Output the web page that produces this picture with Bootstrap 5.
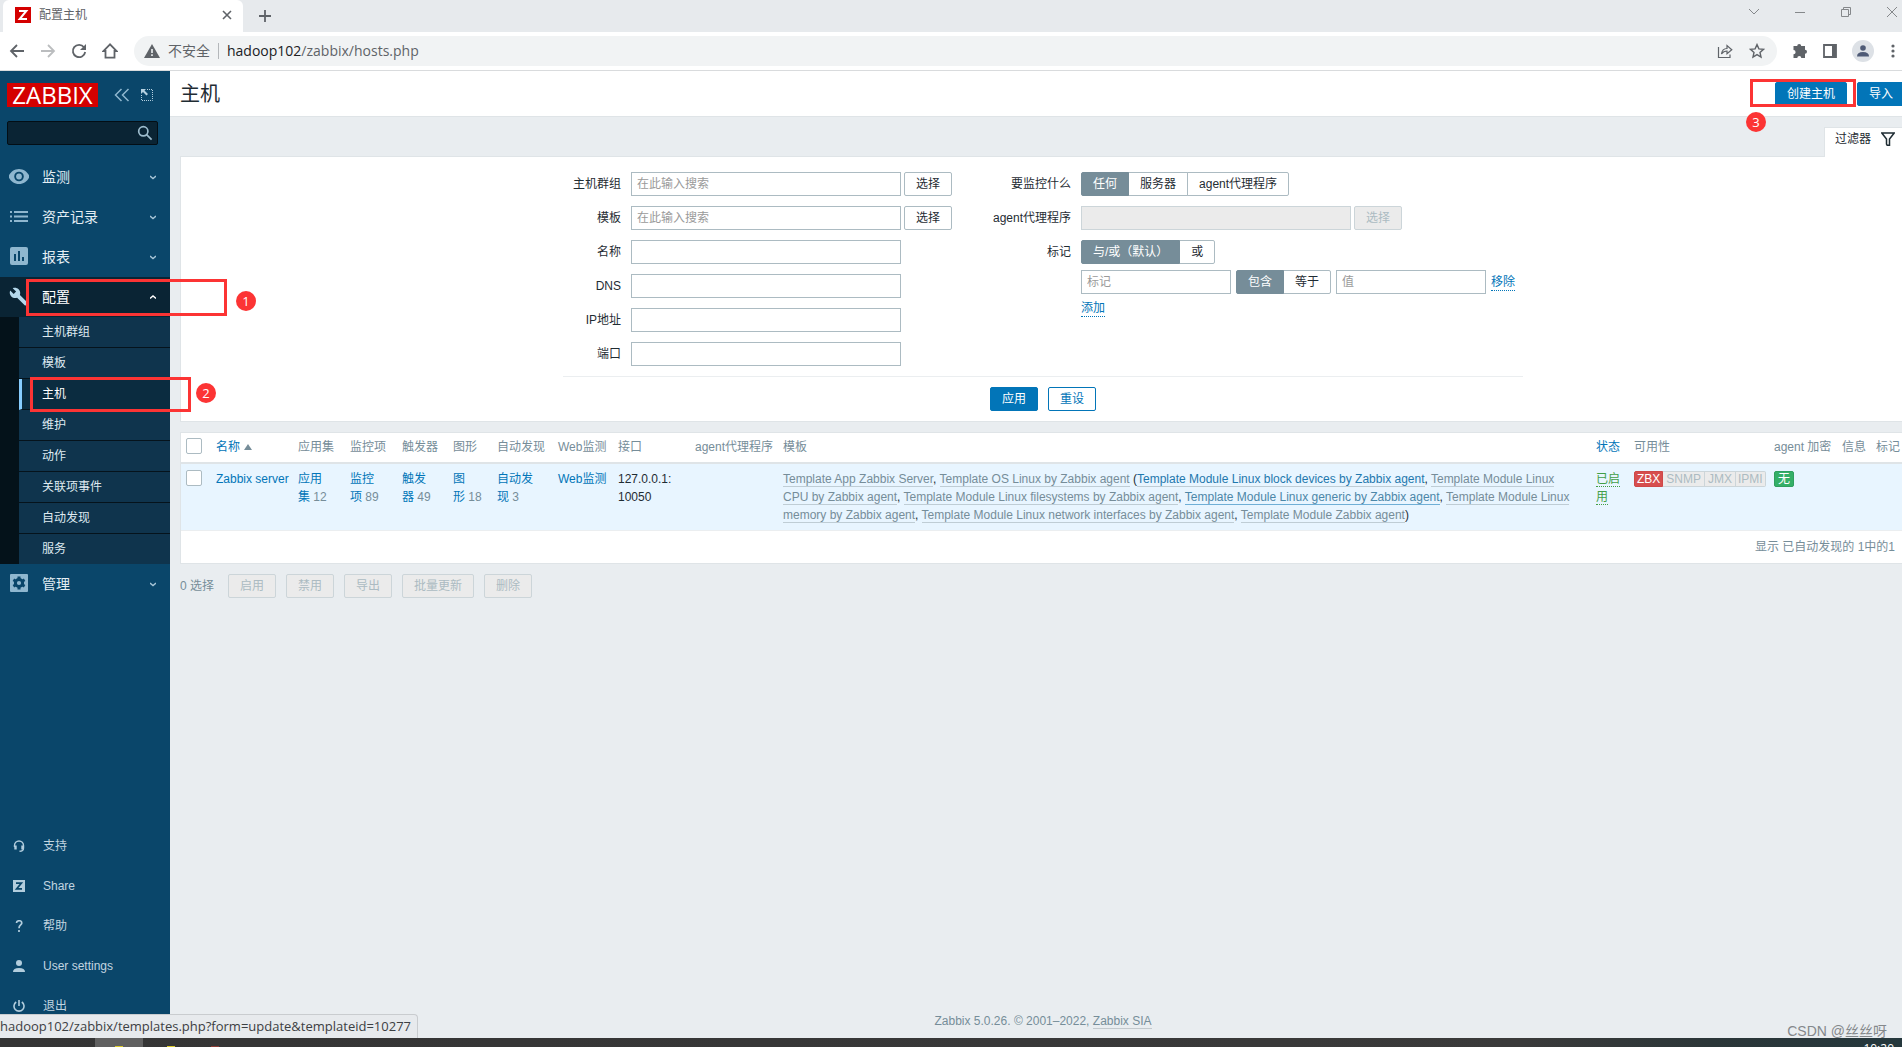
<!DOCTYPE html>
<html lang="zh-CN">
<head>
<meta charset="utf-8">
<meta name="viewport" content="width=device-width, initial-scale=1">
<title>配置主机</title>
<link rel="stylesheet" href="https://cdn.jsdelivr.net/npm/bootstrap@5.3.0/dist/css/bootstrap.min.css">
<script src="https://cdn.jsdelivr.net/npm/bootstrap@5.3.0/dist/js/bootstrap.bundle.min.js"></script>
<style>
  :root { --zbx-blue:#0275b8; --zbx-grey:#768d99; --zbx-text:#1f2c33; --zbx-edge:#dfe4e7; --zbx-field:#acbbc2; --mark-red:#fc3434; }
  body { font-family:"Liberation Sans","Noto Sans CJK SC",sans-serif; font-size:12px; line-height:18px; color:var(--zbx-text); background:#e9edf0; }
  svg { display:block; flex:none; }

  /* browser frame */
  .chrome-ui { font-family:"Open Sans","Noto Sans CJK SC",sans-serif; color:#5f6368; }
  .tab-strip { height:32px; background:#e7eaed; }
  .page-tab { width:240px; margin-left:3px; padding:0 10px 2px 12px; background:#fff; border-radius:6px 6px 0 0; }
  .page-tab span { font-size:12px; }
  .chrome-ui button { border:0; background:none; padding:0; color:inherit; }
  .win-keys { gap:30px; margin-right:2px; color:#85888b; }
  .tool-strip { height:39px; background:#fff; border-bottom:1px solid #d9dbdd; gap:15px; padding:0 5px 0 9px; }
  .omnibox { height:30px; border-radius:15px; background:#f1f3f4; font-size:14px; margin-left:1px; padding:0 12px 0 10px; }
  .omnibox .sep { width:1px; height:16px; background:#b4b7ba; margin:0 8px; }
  .omnibox a { color:inherit; }
  .omnibox a b { font-weight:400; color:#202124; }
  .chrome-ui .avatar-dot { width:22px; height:22px; border-radius:50%; background:#dde1e6; }

  /* sidebar */
  .side { width:170px; background:#0a466a; flex:none; }
  .side-top { padding:12px 12px 0 7px; }
  .zlogo { width:91px; height:24px; background:#d40000; color:#fff; font:24px/24px "Open Sans",sans-serif; text-align:center; }
  .side-search { height:24px; margin:14px 12px 12px 7px; background:#0a2434; border:1px solid #030e15; border-radius:2px; padding-right:4px; }
  .side-search input { background:none; border:0; width:100%; color:#fff; min-width:0; outline:0; padding:0 6px; }
  .main-item { height:40px; padding:0 14px 0 9px; color:#e4eef4; font-size:14px; gap:13px; text-decoration:none; }
  .main-item.active { background:#0a2434; color:#fff; }
  .main-item svg:first-child { color:#8fb7cf; }
  .submenu { border-left:19px solid #04121a; }
  .submenu a { display:block; height:31px; padding:6px 0 0 23px; border-bottom:1px solid #05131c; background:#0f344d; color:#dfeaf1; text-decoration:none; }
  .submenu li:last-child a { height:30px; border-bottom:0; }
  .submenu a.active { background:#0b2c40; color:#fff; border-left:3px solid #87cdff; padding-left:20px; }
  .low-menu { padding-bottom:12px; }
  .low-menu a { height:40px; padding:0 13px; gap:18px; color:#c2d5e0; text-decoration:none; }
  .low-menu svg { color:#b2cddd; }

  /* page */
  .page-main { min-width:0; margin-right:-14px; }
  .page-head { background:#fff; border-bottom:1px solid var(--zbx-edge); padding:10px 11px 9px 10px; gap:10px; }
  .page-head h1 { font-size:20px; line-height:26px; margin:0; }
  .btn { --bs-btn-font-size:12px; --bs-btn-line-height:16px; --bs-btn-padding-x:11px; --bs-btn-padding-y:3px; --bs-btn-border-radius:2px; height:24px; white-space:nowrap; }
  .btn-zbx { --bs-btn-color:#fff; --bs-btn-bg:var(--zbx-blue); --bs-btn-border-color:var(--zbx-blue); --bs-btn-hover-color:#fff; --bs-btn-hover-bg:#02659f; }
  .btn-line { --bs-btn-color:var(--zbx-blue); --bs-btn-bg:#fff; --bs-btn-border-color:var(--zbx-blue); }
  .btn-pick { --bs-btn-color:var(--zbx-text); --bs-btn-bg:#fff; --bs-btn-border-color:var(--zbx-field); --bs-btn-active-bg:var(--zbx-grey); --bs-btn-active-color:#fff; --bs-btn-active-border-color:var(--zbx-grey); }
  .btn-off { --bs-btn-disabled-color:#acbbc2; --bs-btn-disabled-bg:#ebebeb; --bs-btn-disabled-border-color:#ccd5d9; --bs-btn-disabled-opacity:1; }
  .page-body { padding:10px 10px 0; }
  .panel { background:#fff; border:1px solid var(--zbx-edge); }
  .filter-tab { background:#fff; border:1px solid var(--zbx-edge); border-bottom:0; padding:0 10px 8px; height:30px; gap:10px; margin-bottom:-1px; z-index:1; position:relative; color:inherit; text-decoration:none; }
  .filter-box { padding:15px 0 10px; }
  .filter-form { width:960px; }
  .pair { display:flex; align-items:center; gap:10px; margin-bottom:10px; min-height:24px; }
  .pair > .cap { width:58px; text-align:right; white-space:nowrap; }
  .right-col { padding-left:10px; }
  .right-col .cap { width:78px; }
  .left-col { width:420px; }
  .with-pick { display:flex; gap:3px; }
  .tag-mode { margin-bottom:6px; }
  .tag-row { margin-bottom:2px; }
  .tag-cells { display:flex; align-items:center; gap:5px; }
  .form-control { height:24px; padding:2px 5px; font-size:12px; line-height:18px; border:1px solid var(--zbx-field); border-radius:0; width:270px; color:var(--zbx-text); }
  .form-control::placeholder { color:#9a9a9a; }
  .form-control:disabled { background:#ebebeb; border-color:#ccd5d9; }
  .form-control.half { width:150px; }
  .dot-link { text-decoration:none; border-bottom:1px dotted; line-height:16px; color:var(--zbx-blue); }
  .filter-foot { border-top:1px solid #ebeef0; padding-top:10px; gap:10px; }

  .hosts-panel { margin-top:10px; }
  .hosts { table-layout:fixed; margin:0; --bs-table-bg:transparent; width:100%; }
  .hosts th, .hosts td { padding:6px 5px; vertical-align:top; }
  .hosts th { font-weight:400; color:var(--zbx-grey) !important; white-space:nowrap; padding:5px 5px 6px; border-bottom:2px solid var(--zbx-edge); }
  .hosts tbody td { background:#e8f5ff; border-bottom:1px solid #ebeef0; color:var(--zbx-text); }
  .hosts a { color:var(--zbx-blue); text-decoration:none; }
  .hosts .num { color:var(--zbx-grey); }
  .hosts td.tpl { padding-right:12px; }
  .hosts .tpl a { color:var(--zbx-grey); border-bottom:1px solid #bfcdd5; }
  .hosts .tpl a.hot { color:#1f78ad; }
  .hosts .tpl a.warm { color:#4c87a8; border-color:#6fafd6; }
  .hosts .ok-link { color:#429e47; border-bottom:1px dotted; }
  .hosts .form-check-input { width:16px; height:16px; margin:0; border:1px solid var(--zbx-field); border-radius:2px; display:block; }
  .flags { display:inline-flex; line-height:14px; }
  .flags span { border:1px solid #ccd5d9; border-left-width:0; background:#ebebeb; color:#acbbc2; padding:0 3px; }
  .flags span:first-child { border:1px solid #cf4747; background:#d64e4e; color:#fff; border-radius:2px 0 0 2px; padding:0 2px; }
  .flags span:last-child { border-radius:0 2px 2px 0; padding:0 2px; }
  .enc { display:inline-block; background:#34af67; border:1px solid #2f9f5e; border-radius:2px; color:#fff; line-height:14px; padding:0 3px; }
  .muted { color:var(--zbx-grey); }
  .found-row { padding:7px 10px; text-align:right; }
  .bulk { margin-top:10px; gap:10px; }
  .bulk .muted { margin-right:4px; }
  .page-foot { padding:0 0 8px; color:var(--zbx-grey); }
  .page-foot a { color:inherit; text-decoration:none; border-bottom:1px solid #c3c9cd; }

  /* overlays */
  .status-tip { position:absolute; left:0; bottom:0; height:24px; padding:2px 6px 0 0; background:#e7eaed; border:1px solid #c9cccf; border-width:1px 1px 0 0; border-radius:0 4px 0 0; color:#3c4043; font-size:13px; z-index:5; }
  .frame-mark { position:absolute; border:3px solid var(--mark-red); z-index:6; pointer-events:none; }
  .frame-mark i { position:absolute; width:20px; height:20px; border-radius:50%; background:var(--mark-red); color:#fff; font:13px/20px "Open Sans",sans-serif; text-align:center; }
  .mk1 { left:26px; top:279px; width:201px; height:37px; } .mk1 i { right:-32px; top:9px; }
  .mk2 { left:30px; top:377px; width:161px; height:35px; } .mk2 i { right:-28px; top:3px; }
  .mk3 { right:46px; top:79px; width:106px; height:28px; } .mk3 i { left:-7px; top:30px; }
  .watermark { position:absolute; right:15px; bottom:-2px; font-size:14px; line-height:18px; color:#84888b; z-index:4; }
  .taskbar { height:9px; background:linear-gradient(90deg,#343434 0,#3a3a3a 80%,#2b3638 90%,#25383d 100%); overflow:hidden; position:relative; flex:none; }
  .taskbar .slot { margin-left:95px; width:48px; background:#606060; }
  .taskbar .spot { width:8px; height:1px; align-self:flex-end; background:#d9c92b; }
  .taskbar .spot.red { background:#8a3b34; margin-left:36px; }
  .taskbar time { position:absolute; right:8px; top:4px; color:#fff; font:12px/14px "Open Sans",sans-serif; }
</style>
</head>
<body class="vh-100 d-flex flex-column overflow-hidden position-relative">

<header class="chrome-ui flex-shrink-0">
  <div class="tab-strip d-flex">
    <div class="page-tab d-flex align-items-center gap-2">
      <svg width="16" height="16" viewBox="0 0 16 16"><path fill="#d40000" d="M0 0h16v16H0z"/><path fill="none" stroke="#fff" stroke-width="2" d="M4 4h7.3L4.7 12H12"/></svg>
      <span>配置主机</span>
      <button class="ms-auto" aria-label="关闭标签页"><svg width="12" height="12" viewBox="0 0 12 12" stroke="currentColor" stroke-width="1.6"><path d="M2 2l8 8M10 2l-8 8"/></svg></button>
    </div>
    <button class="ms-3" aria-label="新标签页"><svg width="12" height="12" viewBox="0 0 12 12" stroke="currentColor" stroke-width="1.8"><path d="M6 0v12M0 6h12"/></svg></button>
    <div class="win-keys d-flex ms-auto align-items-start pt-1">
      <button aria-label="搜索标签页"><svg width="16" height="16" viewBox="0 0 16 16" fill="none" stroke="currentColor"><path d="M3 5l5 5 5-5"/></svg></button>
      <button aria-label="最小化"><svg width="16" height="16" viewBox="0 0 16 16" fill="none" stroke="currentColor"><path d="M3 8.500h10"/></svg></button>
      <button aria-label="还原"><svg width="16" height="16" viewBox="0 0 16 16" fill="none" stroke="currentColor"><path d="M3.500 5.500h7v7h-7zM5.500 5.500v-2h7v7h-2"/></svg></button>
      <button aria-label="关闭"><svg width="16" height="16" viewBox="0 0 16 16" fill="none" stroke="currentColor"><path d="M3 3l10 10M13 3L3 13"/></svg></button>
    </div>
  </div>
  <div class="tool-strip d-flex align-items-center">
    <button aria-label="后退"><svg width="16" height="16" viewBox="0 0 16 16" fill="none" stroke="currentColor" stroke-width="1.8"><path d="M15 8H2M8 2L2 8l6 6"/></svg></button>
    <button aria-label="前进"><svg width="16" height="16" viewBox="0 0 16 16" fill="none" stroke="#bbbdbf" stroke-width="1.8"><path d="M1 8h13M8 2l6 6-6 6"/></svg></button>
    <button aria-label="刷新"><svg width="16" height="16" viewBox="0 0 16 16"><path fill="none" stroke="currentColor" stroke-width="1.8" d="M13 4.200A6.200 6.200 0 1 0 14.200 9"/><path fill="currentColor" d="M15 1v6H9z"/></svg></button>
    <button aria-label="主页"><svg width="16" height="16" viewBox="0 0 16 16" fill="none" stroke="currentColor" stroke-width="1.800"><path d="M8 1.300L1.400 8H3.500v6.600h9V8h2.100z"/></svg></button>
    <div class="omnibox d-flex align-items-center flex-grow-1">
      <svg width="16" height="14" viewBox="0 0 16 14"><path fill="currentColor" d="M8 0l8 14H0z"/><path stroke="#f1f3f4" stroke-width="1.600" d="M8 5v4M8 10.300v1.600"/></svg>
      <span class="ms-2">不安全</span><span class="sep"></span>
      <a class="text-decoration-none" href="#"><b>hadoop102</b>/zabbix/hosts.php</a>
      <button class="ms-auto" aria-label="分享"><svg width="16" height="16" viewBox="0 0 16 16" fill="none" stroke="currentColor" stroke-width="1.200"><path d="M1.500 4v10.500h11.500v-3M4.500 11c.5-4 2.500-5.500 5.500-5.500V2.500l4.800 4.200-4.800 4V8c-2.500 0-4 .8-5.500 3z"/></svg></button>
      <button class="ms-3" aria-label="收藏"><svg width="16" height="16" viewBox="0 0 16 16" fill="none" stroke="currentColor" stroke-width="1.400"><path d="M8 1.600l1.900 4.300 4.600.4-3.500 3.100 1 4.600-4-2.400-4 2.400 1-4.600L1.500 6.300l4.600-.4z"/></svg></button>
    </div>
    <button aria-label="扩展程序"><svg width="16" height="16" viewBox="0 0 16 16" fill="currentColor"><path d="M5.200 3a2 2 0 0 1 4 0H13v3.800a2 2 0 0 1 0 4V15H9.300a2 2 0 0 0-4 0H1.500v-3.700a2 2 0 0 0 0-4.200V3z"/></svg></button>
    <button aria-label="侧边栏"><svg width="14" height="14" viewBox="0 0 14 14"><path fill="none" stroke="currentColor" stroke-width="1.800" d="M1 1h12v12H1z"/><path fill="currentColor" d="M9 1h4v12H9z"/></svg></button>
    <button class="avatar-dot d-flex align-items-center justify-content-center" aria-label="用户"><svg width="12" height="12" viewBox="0 0 12 12" fill="#4f5b76"><circle cx="6" cy="3" r="2.800"/><path d="M0 11.500c0-3 2-4.500 6-4.500s6 1.500 6 4.500z"/></svg></button>
    <button aria-label="更多"><svg width="8" height="16" viewBox="0 0 8 16" fill="currentColor"><circle cx="4" cy="3" r="1.600"/><circle cx="4" cy="8" r="1.600"/><circle cx="4" cy="13" r="1.600"/></svg></button>
  </div>
</header>

<div class="d-flex flex-grow-1 position-relative overflow-hidden">
  <nav class="side d-flex flex-column">
    <div class="side-top d-flex align-items-center">
      <div class="zlogo">ZABBIX</div>
      <svg class="ms-3" width="16" height="14" viewBox="0 0 16 14" fill="none" stroke="#8fb7cf" stroke-width="1.500"><path d="M7.500 1l-6 6 6 6M14.500 1l-6 6 6 6"/></svg>
      <svg class="ms-auto me-1" width="14" height="14" viewBox="0 0 14 14"><path fill="none" stroke="#b5d0e0" stroke-dasharray="1 1" d="M7 1.500h5.500v11h-11V7"/><path fill="#b5d0e0" d="M1 1h5L4.500 2.500 8 6 6.500 7.500 3 4 1 6z"/></svg>
    </div>
    <div class="side-search d-flex align-items-center">
      <input type="text" aria-label="搜索">
      <svg width="16" height="16" viewBox="0 0 16 16" fill="none" stroke="#9dbccd" stroke-width="1.700"><circle cx="6.300" cy="6.300" r="4.600"/><path d="M9.600 9.600l5 5"/></svg>
    </div>
    <a class="main-item d-flex align-items-center" href="#"><svg width="20" height="20" viewBox="0 0 20 20"><path fill="currentColor" fill-rule="evenodd" d="M10 2C5 2 1 5.500-.5 9.500 1 13.500 5 17 10 17s9-3.500 10.500-7.500C19 5.500 15 2 10 2zm0 2.700a4.800 4.800 0 1 1 0 9.600 4.800 4.800 0 0 1 0-9.600z"/><circle cx="10" cy="9.500" r="2.900" fill="currentColor"/></svg>监测<svg class="ms-auto" width="6" height="6" viewBox="0 0 6 6" fill="none" stroke="#a8c5d6" stroke-width="1.400"><path d="M0 2l3 2.500L6 2"/></svg></a>
    <a class="main-item d-flex align-items-center" href="#"><svg width="20" height="20" viewBox="0 0 20 20" fill="currentColor"><path d="M1 4h2v2H1zM5 4h14v2H5zM1 8.500h2v2H1zM5 8.500h14v2H5zM1 13h2v2H1zM5 13h14v2H5z"/></svg>资产记录<svg class="ms-auto" width="6" height="6" viewBox="0 0 6 6" fill="none" stroke="#a8c5d6" stroke-width="1.400"><path d="M0 2l3 2.500L6 2"/></svg></a>
    <a class="main-item d-flex align-items-center" href="#"><svg width="20" height="20" viewBox="0 0 20 20"><rect x="1" y="0" width="18" height="18" rx="2" fill="currentColor"/><path fill="#0a466a" d="M5 7h2v7H5zM9 4h2v10H9zM13 10h2v4h-2z"/></svg>报表<svg class="ms-auto" width="6" height="6" viewBox="0 0 6 6" fill="none" stroke="#a8c5d6" stroke-width="1.400"><path d="M0 2l3 2.500L6 2"/></svg></a>
    <a class="main-item active d-flex align-items-center" href="#"><svg width="20" height="20" viewBox="0 0 20 20"><path fill="#b4d8ec" d="M18.500 15.600l-7.600-7.500C11.600 6.100 11.200 3.900 9.600 2.300 8 .7 5.600.4 3.700 1.200L7.100 4.600 4.700 7 1.200 3.600C.3 5.500.7 7.900 2.300 9.500c1.600 1.600 3.900 2 5.800 1.200l7.600 7.600c.3.300.9.300 1.200 0l1.600-1.500c.4-.3.400-.9 0-1.200z"/></svg>配置<svg class="ms-auto" width="6" height="6" viewBox="0 0 6 6" fill="none" stroke="#fff" stroke-width="1.400"><path d="M0 4.500L3 2l3 2.500"/></svg></a>
    <ul class="submenu list-unstyled mb-0">
      <li><a href="#">主机群组</a></li>
      <li><a href="#">模板</a></li>
      <li><a class="active" href="#">主机</a></li>
      <li><a href="#">维护</a></li>
      <li><a href="#">动作</a></li>
      <li><a href="#">关联项事件</a></li>
      <li><a href="#">自动发现</a></li>
      <li><a href="#">服务</a></li>
    </ul>
    <a class="main-item d-flex align-items-center" href="#"><svg width="20" height="20" viewBox="0 0 20 20"><rect x="1" y="0" width="18" height="18" rx="1" fill="currentColor"/><circle cx="10" cy="9" r="3.600" fill="none" stroke="#0a466a" stroke-width="3"/><path stroke="#0a466a" stroke-width="3" d="M10 2.500v3M10 12.500v3M4.400 5.800l2.400 1.400M13.200 10.800l2.400 1.400M4.400 12.200l2.400-1.400M13.200 7.200l2.400-1.400"/></svg>管理<svg class="ms-auto" width="6" height="6" viewBox="0 0 6 6" fill="none" stroke="#a8c5d6" stroke-width="1.400"><path d="M0 2l3 2.500L6 2"/></svg></a>
    <div class="low-menu mt-auto">
      <a class="d-flex align-items-center" href="#"><svg width="12" height="12" viewBox="0 0 12 12" fill="none" stroke="currentColor"><path stroke-width="1.400" d="M1.500 7V5.500a4.500 4.500 0 0 1 9 0V8c0 2-1.500 3.300-4 3.300"/><path stroke-width="2.400" d="M2.500 5.500v4M9.500 5.500v4"/></svg>支持</a>
      <a class="d-flex align-items-center" href="#"><svg width="12" height="12" viewBox="0 0 12 12"><path fill="currentColor" d="M0 0h12v12H0z"/><path fill="none" stroke="#0a466a" stroke-width="1.800" d="M3 3.200h5.300L3.700 8.800H9"/></svg>Share</a>
      <a class="d-flex align-items-center" href="#"><svg width="12" height="12" viewBox="0 0 12 12" fill="none" stroke="currentColor" stroke-width="1.700"><path d="M3.500 3c0-3 5.300-3 5.300 0C8.800 5 6 5 6 8.200M6 10v2"/></svg>帮助</a>
      <a class="d-flex align-items-center" href="#"><svg width="12" height="12" viewBox="0 0 12 12" fill="currentColor"><circle cx="6" cy="3" r="3"/><path d="M0 12c0-2.800 2-4 6-4s6 1.200 6 4z"/></svg>User settings</a>
      <a class="d-flex align-items-center" href="#"><svg width="12" height="12" viewBox="0 0 12 12" fill="none" stroke="currentColor" stroke-width="1.600"><path d="M3.200 2a5 5 0 1 0 5.600 0M6 0v6"/></svg>退出</a>
    </div>
  </nav>

  <main class="page-main flex-grow-1 d-flex flex-column">
    <div class="page-head d-flex align-items-center">
      <h1 class="fw-normal me-auto">主机</h1>
      <button class="btn btn-zbx" type="button">创建主机</button>
      <button class="btn btn-zbx" type="button">导入</button>
    </div>

    <div class="page-body">
      <div class="d-flex justify-content-end">
        <a class="filter-tab d-flex align-items-center" href="#">过滤器<svg width="14" height="14" viewBox="0 0 14 14" fill="none" stroke="#1f2c33" stroke-width="1.500"><path d="M.8 1h12.400L8.500 7v6.300H6.200L5.500 12V7z"/></svg></a>
      </div>
      <form class="panel filter-box">
        <div class="filter-form mx-auto">
          <div class="d-flex">
            <div class="left-col">
              <div class="pair"><label class="cap" for="f-group">主机群组</label><div class="with-pick"><input class="form-control" id="f-group" placeholder="在此输入搜索"><button class="btn btn-pick" type="button">选择</button></div></div>
              <div class="pair"><label class="cap" for="f-tpl">模板</label><div class="with-pick"><input class="form-control" id="f-tpl" placeholder="在此输入搜索"><button class="btn btn-pick" type="button">选择</button></div></div>
              <div class="pair"><label class="cap" for="f-name">名称</label><input class="form-control" id="f-name"></div>
              <div class="pair"><label class="cap" for="f-dns">DNS</label><input class="form-control" id="f-dns"></div>
              <div class="pair"><label class="cap" for="f-ip">IP地址</label><input class="form-control" id="f-ip"></div>
              <div class="pair"><label class="cap" for="f-port">端口</label><input class="form-control" id="f-port"></div>
            </div>
            <div class="right-col">
              <div class="pair"><span class="cap" id="c-mon">要监控什么</span>
                <div class="btn-group" role="group" aria-labelledby="c-mon">
                  <input class="btn-check" type="radio" name="mon" id="m1" checked><label class="btn btn-pick" for="m1">任何</label>
                  <input class="btn-check" type="radio" name="mon" id="m2"><label class="btn btn-pick" for="m2">服务器</label>
                  <input class="btn-check" type="radio" name="mon" id="m3"><label class="btn btn-pick" for="m3">agent代理程序</label>
                </div></div>
              <div class="pair"><label class="cap" for="f-proxy">agent代理程序</label><div class="with-pick"><input class="form-control" id="f-proxy" disabled><button class="btn btn-off" type="button" disabled>选择</button></div></div>
              <div class="pair tag-mode"><span class="cap" id="c-tag">标记</span>
                <div class="btn-group" role="group" aria-labelledby="c-tag">
                  <input class="btn-check" type="radio" name="tg" id="t1" checked><label class="btn btn-pick" for="t1">与/或（默认）</label>
                  <input class="btn-check" type="radio" name="tg" id="t2"><label class="btn btn-pick" for="t2">或</label>
                </div></div>
              <div class="pair tag-row"><span class="cap"></span>
                <div class="tag-cells">
                  <input class="form-control half" aria-label="标记" placeholder="标记">
                  <div class="btn-group" role="group" aria-label="匹配方式">
                    <input class="btn-check" type="radio" name="op" id="o1" checked><label class="btn btn-pick" for="o1">包含</label>
                    <input class="btn-check" type="radio" name="op" id="o2"><label class="btn btn-pick" for="o2">等于</label>
                  </div>
                  <input class="form-control half" aria-label="值" placeholder="值">
                  <a class="dot-link" href="#">移除</a>
                </div></div>
              <div class="pair mb-0"><span class="cap"></span><a class="dot-link" href="#">添加</a></div>
            </div>
          </div>
          <div class="filter-foot d-flex justify-content-center">
            <button class="btn btn-zbx" type="submit">应用</button>
            <button class="btn btn-line" type="reset">重设</button>
          </div>
        </div>
      </form>

      <div class="panel hosts-panel">
        <table class="table table-borderless hosts">
          <colgroup><col style="width:30px"><col style="width:82px"><col style="width:52px"><col style="width:52px"><col style="width:51px"><col style="width:44px"><col style="width:61px"><col style="width:60px"><col style="width:77px"><col style="width:88px"><col><col style="width:38px"><col style="width:140px"><col style="width:68px"><col style="width:34px"><col style="width:34px"></colgroup>
          <thead><tr>
            <th><input class="form-check-input" type="checkbox" aria-label="全选"></th>
            <th><a class="d-inline-flex align-items-center gap-1" href="#">名称<svg width="8" height="6" viewBox="0 0 8 6"><path fill="#768d99" d="M4 0l4 6H0z"/></svg></a></th>
            <th>应用集</th><th>监控项</th><th>触发器</th><th>图形</th><th>自动发现</th><th>Web监测</th><th>接口</th><th>agent代理程序</th><th>模板</th><th><a href="#">状态</a></th><th>可用性</th><th>agent 加密</th><th>信息</th><th>标记</th>
          </tr></thead>
          <tbody><tr>
            <td><input class="form-check-input" type="checkbox" aria-label="Zabbix server"></td>
            <td class="text-nowrap"><a href="#">Zabbix server</a></td>
            <td><a href="#">应用集</a><span class="num">&nbsp;12</span></td>
            <td><a href="#">监控项</a><span class="num">&nbsp;89</span></td>
            <td><a href="#">触发器</a><span class="num">&nbsp;49</span></td>
            <td><a href="#">图形</a><span class="num">&nbsp;18</span></td>
            <td><a href="#">自动发现</a><span class="num">&nbsp;3</span></td>
            <td class="text-nowrap"><a href="#">Web监测</a></td>
            <td>127.0.0.1: 10050</td>
            <td></td>
            <td class="tpl"><a href="#">Template App Zabbix Server</a>, <a href="#">Template OS Linux by Zabbix agent</a> (<a class="hot" href="#">Template Module Linux block devices by Zabbix agent</a>, <a href="#">Template Module Linux CPU by Zabbix agent</a>, <a href="#">Template Module Linux filesystems by Zabbix agent</a>, <a class="warm" href="#">Template Module Linux generic by Zabbix agent</a>, <a href="#">Template Module Linux memory by Zabbix agent</a>, <a href="#">Template Module Linux network interfaces by Zabbix agent</a>, <a href="#">Template Module Zabbix agent</a>)</td>
            <td><a class="ok-link" href="#">已启用</a></td>
            <td><span class="flags"><span>ZBX</span><span>SNMP</span><span>JMX</span><span>IPMI</span></span></td>
            <td><span class="enc">无</span></td>
            <td></td><td></td>
          </tr></tbody>
        </table>
        <div class="muted found-row">显示 已自动发现的 1中的1</div>
      </div>

      <div class="bulk d-flex align-items-center">
        <span class="muted">0 选择</span>
        <button class="btn btn-off" type="button" disabled>启用</button>
        <button class="btn btn-off" type="button" disabled>禁用</button>
        <button class="btn btn-off" type="button" disabled>导出</button>
        <button class="btn btn-off" type="button" disabled>批量更新</button>
        <button class="btn btn-off" type="button" disabled>删除</button>
      </div>
    </div>

    <footer class="page-foot text-center mt-auto">Zabbix 5.0.26. © 2001–2022, <a href="#">Zabbix SIA</a></footer>
  </main>

  <div class="status-tip chrome-ui">hadoop102/zabbix/templates.php?form=update&amp;templateid=10277</div>
  <div class="watermark">CSDN @丝丝呀</div>
</div>

<div class="taskbar d-flex">
  <div class="slot d-flex justify-content-center"><div class="spot"></div></div>
  <div class="spot ms-4"></div>
  <div class="spot red"></div>
  <time>10:20</time>
</div>

<div class="frame-mark mk1"><i>1</i></div>
<div class="frame-mark mk2"><i>2</i></div>
<div class="frame-mark mk3"><i>3</i></div>
</body>
</html>
